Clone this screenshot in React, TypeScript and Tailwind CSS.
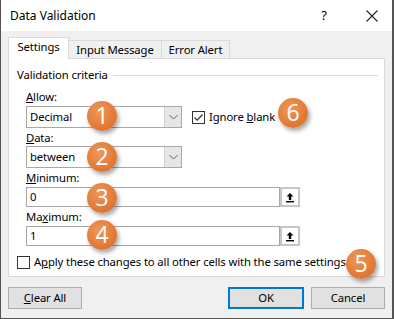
import React from "react";

const font = { fontFamily: '"Noto Sans", "Segoe UI", sans-serif' };

function Badge({ n, x, y }: { n: number; x: number; y: number }) {
  return (
    <div
      className="absolute w-[30px] h-[30px] rounded-full flex items-center justify-center text-white text-[23px] leading-none tracking-normal bg-[radial-gradient(circle_at_40%_35%,#f0975a,#e27a36_60%,#d2692a)] shadow-[2px_3px_4px_rgba(0,0,0,0.35)]"
      style={{ left: x - 15, top: y - 15, fontFamily: '"Open Sans", sans-serif', fontWeight: 400 }}
    >
      <span className="-mt-[1px]">{n}</span>
    </div>
  );
}

function Chevron() {
  return (
    <svg width="9" height="6" viewBox="0 0 9 6">
      <path d="M0.5 1 L4.5 5 L8.5 1" fill="none" stroke="#606060" strokeWidth="1" />
    </svg>
  );
}

function Select({ value }: { value: string }) {
  return (
    <div className="flex w-[156px] h-[22px] border border-[#a8a8a8] bg-white">
      <div className="flex-1 pl-[3px] leading-[20px] text-black">{value}</div>
      <div className="w-[17px] h-full bg-[#e6e6e6] border-l border-[#d0d0d0] flex items-center justify-center">
        <Chevron />
      </div>
    </div>
  );
}

function RefInput({ value }: { value: string }) {
  return (
    <div className="flex w-[274px] h-[20px]">
      <div className="flex-1 border border-[#a8a8a8] bg-white pl-[3px] leading-[18px] text-black">{value}</div>
      <div className="w-[20px] h-full border-2 border-[#c6c6c6] bg-white flex items-center justify-center">
        <svg width="10" height="11" viewBox="0 0 10 11">
          <path d="M5 1 L1.5 4.5 H3.8 V8 H6.2 V4.5 H8.5 Z" fill="#000" />
          <rect x="1" y="9" width="8" height="1.4" fill="#000" />
        </svg>
      </div>
    </div>
  );
}

function CheckBox({ checked }: { checked?: boolean }) {
  return (
    <div className="w-[13px] h-[13px] border border-[#333] bg-white flex items-center justify-center shrink-0">
      {checked && (
        <svg width="11" height="11" viewBox="0 0 11 11">
          <path d="M1.5 5.5 L4.2 8.2 L9.5 2.5" fill="none" stroke="#333" strokeWidth="1.2" />
        </svg>
      )}
    </div>
  );
}

export default function App() {
  return (
    <div
      className="relative w-[394px] h-[319px] bg-[#f0f0f0] border-l border-r-2 border-b border-[#555] flex flex-col text-[11.3px] tracking-[-0.12px] text-black overflow-hidden"
      style={font}
    >
      {/* title bar */}
      <div className="h-[31px] bg-white flex items-center shrink-0">
        <div className="pl-[9px] flex-1 text-[12px] tracking-normal">Data Validation</div>
        <div className="w-[20px] text-[13px] mr-[32px] text-center">?</div>
        <div className="mr-[14px] flex items-center">
          <svg width="12" height="12" viewBox="0 0 12 12">
            <path d="M0.5 0.5 L11.5 11.5 M11.5 0.5 L0.5 11.5" stroke="#222" strokeWidth="1.1" />
          </svg>
        </div>
      </div>

      {/* body */}
      <div className="flex-1 flex flex-col px-[7px]">
        {/* tabs */}
        <div className="flex items-end h-[28px] pt-[7px] relative z-10">
          <div className="w-[61px] h-[22px] bg-white border border-b-0 border-[#d9d9d9] flex items-center justify-center pb-[2px]">Settings</div>
          <div className="w-[93px] h-[18px] bg-[#f0f0f0] border border-l-0 border-b-0 border-[#d9d9d9] flex items-center justify-center mb-[1px] leading-none">Input Message</div>
          <div className="w-[68px] h-[18px] bg-[#f0f0f0] border border-l-0 border-b-0 border-[#d9d9d9] flex items-center justify-center mb-[1px] leading-none">Error Alert</div>
        </div>

        {/* panel */}
        <div className="h-[219px] -mt-[1px] bg-white border border-[#d9d9d9] pt-[8px] pl-[8px] pr-[6px] flex flex-col">
          <div className="flex items-center h-[16px]">
            <span className="whitespace-nowrap">Validation criteria</span>
            <div className="flex-1 h-px bg-[#dcdcdc] ml-[5px]" />
          </div>

          <div className="pl-[9px] flex flex-col">
            <div className="h-[16px] leading-[16px] mt-[6px]"><u>A</u>llow:</div>
            <div className="flex items-center mt-[1px]">
              <Select value="Decimal" />
              <div className="ml-[10px] flex items-center">
                <CheckBox checked />
                <span className="ml-[4px] whitespace-nowrap">Ignore <u>b</u>lank</span>
              </div>
            </div>
            <div className="h-[16px] leading-[16px] mt-[2px]"><u>D</u>ata:</div>
            <div><Select value="between" /></div>
            <div className="h-[16px] leading-[16px] mt-[2px]"><u>M</u>inimum:</div>
            <div className="mt-[1px]"><RefInput value="0" /></div>
            <div className="h-[16px] leading-[16px] mt-[2px]">Ma<u>x</u>imum:</div>
            <div className="mt-[1px]"><RefInput value="1" /></div>
          </div>

          <div className="flex items-center mt-[8px] h-[16px]">
            <CheckBox />
            <span className="ml-[4px] whitespace-nowrap">A<u>p</u>ply these changes to all other cells with the same settings</span>
          </div>
        </div>

        {/* footer */}
        <div className="flex items-center mt-[10px]">
          <div className="w-[74px] h-[22px] bg-[#e1e1e1] border border-[#adadad] flex items-center justify-center"><u>C</u>lear All</div>
          <div className="flex-1" />
          <div className="w-[76px] h-[22px] bg-[#e1e1e1] border-2 border-[#0078d7] flex items-center justify-center">OK</div>
          <div className="w-[74px] h-[22px] ml-[7px] bg-[#e1e1e1] border border-[#adadad] flex items-center justify-center">Cancel</div>
        </div>
      </div>

      <Badge n={1} x={101} y={116} />
      <Badge n={2} x={101} y={157} />
      <Badge n={3} x={101} y={198} />
      <Badge n={4} x={101} y={235} />
      <Badge n={5} x={360} y={264} />
      <Badge n={6} x={292} y={113} />
    </div>
  );
}
